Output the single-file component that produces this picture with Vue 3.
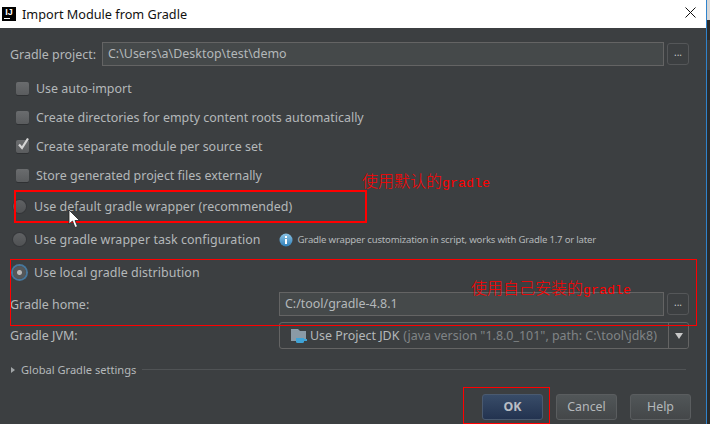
<script setup>
const checks = [
  { label: 'Use auto-import', checked: false },
  { label: 'Create directories for empty content roots automatically', checked: false },
  { label: 'Create separate module per source set', checked: true },
  { label: 'Store generated project files externally', checked: false },
]
</script>

<template>
  <div class="screen">
    <div class="dialog">
      <header class="title">
        <span class="logo"><span class="logo-text">IJ</span><i class="logo-bar"></i></span>
        <span class="title-text">Import Module from Gradle</span>
        <svg class="close" width="11" height="11" viewBox="0 0 11 11">
          <path d="M0.5 0.5L10.5 10.5M10.5 0.5L0.5 10.5" stroke="#111" stroke-width="1" fill="none" />
        </svg>
      </header>

      <main class="body">
        <div class="row project">
          <label class="lbl lbl-project">Gradle project:</label>
          <div class="field">C:\Users\a\Desktop\test\demo</div>
          <button class="browse">...</button>
        </div>

        <div v-for="c in checks" :key="c.label" class="check-row">
          <span class="box">
            <svg v-if="c.checked" width="15" height="15" viewBox="0 0 15 15" class="tick">
              <path d="M3 7.5L6 11L12 1.5" stroke="#d6d6d6" stroke-width="2.2" fill="none" />
            </svg>
          </span>
          <span>{{ c.label }}</span>
        </div>

        <div class="radio-row">
          <span class="radio"></span>
          <span>Use default gradle wrapper (recommended)</span>
        </div>
        <div class="radio-row">
          <span class="radio"></span>
          <span class="wrap-label">Use gradle wrapper task configuration</span>
          <svg class="info" width="14" height="14" viewBox="0 0 14 14">
            <defs>
              <linearGradient id="infoFill" x1="0" y1="0" x2="0" y2="1">
                <stop offset="0" stop-color="#8cc4e6" />
                <stop offset="1" stop-color="#2f7fb8" />
              </linearGradient>
            </defs>
            <circle cx="7" cy="7" r="6.5" fill="url(#infoFill)" />
            <rect x="6" y="3" width="2" height="2" fill="#fff" />
            <rect x="6" y="6" width="2" height="5" fill="#fff" />
          </svg>
          <span class="hint">Gradle wrapper customization in script, works with Gradle 1.7 or later</span>
        </div>
        <div class="radio-row">
          <span class="radio selected"></span>
          <span>Use local gradle distribution</span>
        </div>

        <div class="row home">
          <label class="lbl lbl-wide">Gradle home:</label>
          <div class="field">C:/tool/gradle-4.8.1</div>
          <button class="browse">...</button>
        </div>

        <div class="row jvm">
          <label class="lbl lbl-wide">Gradle JVM:</label>
          <div class="combo">
            <svg class="folder" width="16" height="14" viewBox="0 0 16 14">
              <path d="M0 0H7L9 2H15V12H0Z" fill="#8a9aa6" />
              <path d="M5 9H13V12.5Q13 14 11.5 14H6.5Q5 14 5 12.5Z" fill="#3fa3d6" />
              <rect x="13" y="10" width="3" height="2" fill="#3fa3d6" />
            </svg>
            <span class="jdk">Use Project JDK</span>
            <span class="jdk-path">(java version "1.8.0_101", path: C:\tool\jdk8)</span>
            <span class="combo-arrow"><i></i></span>
          </div>
        </div>

        <div class="global">
          <i class="tri"></i>
          <span class="global-text">Global Gradle settings</span>
          <i class="rule"></i>
        </div>

        <footer class="footer">
          <button class="btn primary">OK</button>
          <button class="btn">Cancel</button>
          <button class="btn">Help</button>
        </footer>
      </main>
    </div>
    <div class="strip"></div>

    <div class="mark mark-default"></div>
    <div class="mark mark-local"></div>
    <div class="mark mark-ok"></div>
    <div class="note note-default">使用默认的<span class="latin">gradle</span></div>
    <div class="note note-local">使用自己安装的<span class="latin">gradle</span></div>
    <svg class="cursor" width="13" height="20" viewBox="0 0 13 20">
      <path d="M1 1V15L4.5 12L7 18.5L9.5 17.5L7 11.5H11.5Z" fill="#fff" stroke="#222" stroke-width="0.8" />
    </svg>
  </div>
</template>

<style scoped>
.screen {
  position: relative;
  display: flex;
  width: 710px;
  height: 424px;
  overflow: hidden;
  font-family: "Noto Sans", "Noto Sans CJK SC", sans-serif;
  font-size: 12.45px;
  color: #b4b8ba;
}
.dialog {
  width: 706px;
  border-right: 1px solid #2f83cc;
  display: flex;
  flex-direction: column;
}
.strip {
  flex: 1;
  background: linear-gradient(#d8d8d8 0 20px, #2c2c2c 20px 40px, #3a3a3a 40px 70px, #2b2b2b 70px);
}
.title {
  height: 28px;
  background: #fff;
  display: flex;
  align-items: center;
  padding-left: 2px;
  color: #111;
  position: relative;
}
.logo {
  width: 14px;
  height: 14px;
  background: #000;
  display: flex;
  flex-direction: column;
  align-items: center;
  margin-right: 6px;
  margin-top: -1px;
}
.logo-text {
  font-family: "Liberation Sans", sans-serif;
  font-weight: 700;
  font-size: 9px;
  line-height: 9px;
  color: #fff;
  margin-top: 1px;
}
.logo-bar {
  width: 6px;
  height: 1px;
  background: #fff;
  margin: 1px 0 0 -5px;
}
.title-text {
  font-size: 12.7px;
  margin-top: -1px;
}
.close {
  position: absolute;
  left: 685px;
  top: 7px;
}
.body {
  flex: 1;
  background: #3c3f41;
  padding-top: 14px;
}
.row {
  display: flex;
  align-items: center;
  padding: 0 17px 0 10px;
}
.project {
  height: 24px;
  margin-bottom: 8px;
}
.lbl-project {
  width: 92px;
  flex: none;
}
.lbl-wide {
  width: 269px;
  flex: none;
}
.field {
  flex: 1;
  height: 24px;
  box-sizing: border-box;
  background: #45494a;
  border: 1px solid #646464;
  padding-left: 5px;
  line-height: 22px;
  color: #b4b8ba;
}
.browse {
  width: 22px;
  height: 22px;
  margin-left: 3px;
  padding: 0 0 4px;
  flex: none;
  background: #3c3f41;
  border: 1px solid #555759;
  border-radius: 3px;
  color: #c8c8c8;
  font: 10px "Noto Sans", sans-serif;
}
.check-row {
  height: 29px;
  display: flex;
  align-items: center;
  padding-left: 16px;
}
.box {
  position: relative;
  width: 13px;
  height: 13px;
  margin-right: 7px;
  background: linear-gradient(#6a6c6e, #5a5c5e);
  border-radius: 2px;
  box-shadow: 0 1px 0 #2f3133;
  flex: none;
}
.tick {
  position: absolute;
  left: 0;
  top: -3px;
}
.radio-row {
  height: 33px;
  display: flex;
  align-items: center;
  padding-left: 13px;
  letter-spacing: 0.06px;
}
.radio {
  width: 13px;
  height: 13px;
  border-radius: 50%;
  margin-right: 8px;
  background: linear-gradient(#5f6163, #505254);
  box-shadow: 0 0 0 1px #35373a;
  flex: none;
}
.radio.selected {
  background: radial-gradient(circle, #b8b8b8 0 2px, #55585a 3px);
  box-shadow: 0 0 0 2px #47779c;
}
.wrap-label {
  margin-right: 18px;
}
.info {
  flex: none;
  margin-right: 5px;
}
.hint {
  font-size: 9.6px;
  letter-spacing: -0.2px;
  white-space: nowrap;
}
.home {
  height: 24px;
  margin-top: 3px;
}
.jvm {
  height: 27px;
  margin-top: 6px;
}
.combo {
  flex: 1;
  height: 27px;
  box-sizing: border-box;
  border: 1px solid #646464;
  border-radius: 3px;
  display: flex;
  align-items: center;
  padding-left: 11px;
  position: relative;
}
.folder {
  margin-right: 3px;
  flex: none;
}
.jdk {
  margin-right: 4px;
}
.jdk-path {
  color: #808486;
}
.combo-arrow {
  position: absolute;
  right: 0;
  top: 0;
  bottom: 0;
  width: 19px;
  border-left: 1px solid #646464;
  background: #3c3f41;
  display: flex;
  align-items: center;
  justify-content: center;
  border-radius: 0 3px 3px 0;
}
.combo-arrow i {
  width: 0;
  height: 0;
  border: 4px solid transparent;
  border-top: 6px solid #c8c8c8;
  border-bottom: 0;
}
.global {
  height: 20px;
  margin-top: 11px;
  display: flex;
  align-items: center;
  padding: 0 20px 0 11px;
  font-size: 11.1px;
}
.global-text {
  margin-top: -2px;
}
.tri {
  width: 0;
  height: 0;
  border: 3.5px solid transparent;
  border-left: 4px solid #a0a4a6;
  border-right: 0;
  margin-right: 6px;
}
.rule {
  flex: 1;
  height: 1px;
  background: #505355;
  margin: -2px 0 0 6px;
}
.footer {
  display: flex;
  justify-content: flex-end;
  gap: 13px;
  margin-top: 14px;
  padding-right: 15px;
}
.btn {
  width: 61px;
  height: 26px;
  padding: 0 0 2px;
  border: 1px solid #5a5d5f;
  border-radius: 3px;
  background: linear-gradient(#515658, #444749);
  color: #b4b8ba;
  font: 12.4px "Noto Sans", sans-serif;
}
.btn.primary {
  background: linear-gradient(#384c68, #233350);
  border-color: #4a5a70;
  color: #b9bec4;
  font-weight: 700;
}
.mark {
  position: absolute;
  box-sizing: border-box;
  pointer-events: none;
}
.mark-default {
  left: 14px;
  top: 190px;
  width: 353px;
  height: 33px;
  border: 2px solid #f00;
}
.mark-local {
  left: 10px;
  top: 259px;
  width: 687px;
  height: 67px;
  border: 1px solid #f00;
}
.mark-ok {
  left: 463px;
  top: 387px;
  width: 87px;
  height: 37px;
  border: 1px solid #f00;
}
.note {
  position: absolute;
  color: #f00;
  font-family: "Noto Sans CJK SC", sans-serif;
  font-size: 16px;
  font-weight: 300;
  line-height: 18px;
  white-space: nowrap;
}
.latin {
  font-family: "Liberation Mono", monospace;
  font-size: 13.33px;
  font-weight: 400;
}
.note-default {
  left: 362px;
  top: 171px;
}
.note-local {
  left: 471px;
  top: 278px;
}
.cursor {
  position: absolute;
  left: 68px;
  top: 209px;
}
</style>
